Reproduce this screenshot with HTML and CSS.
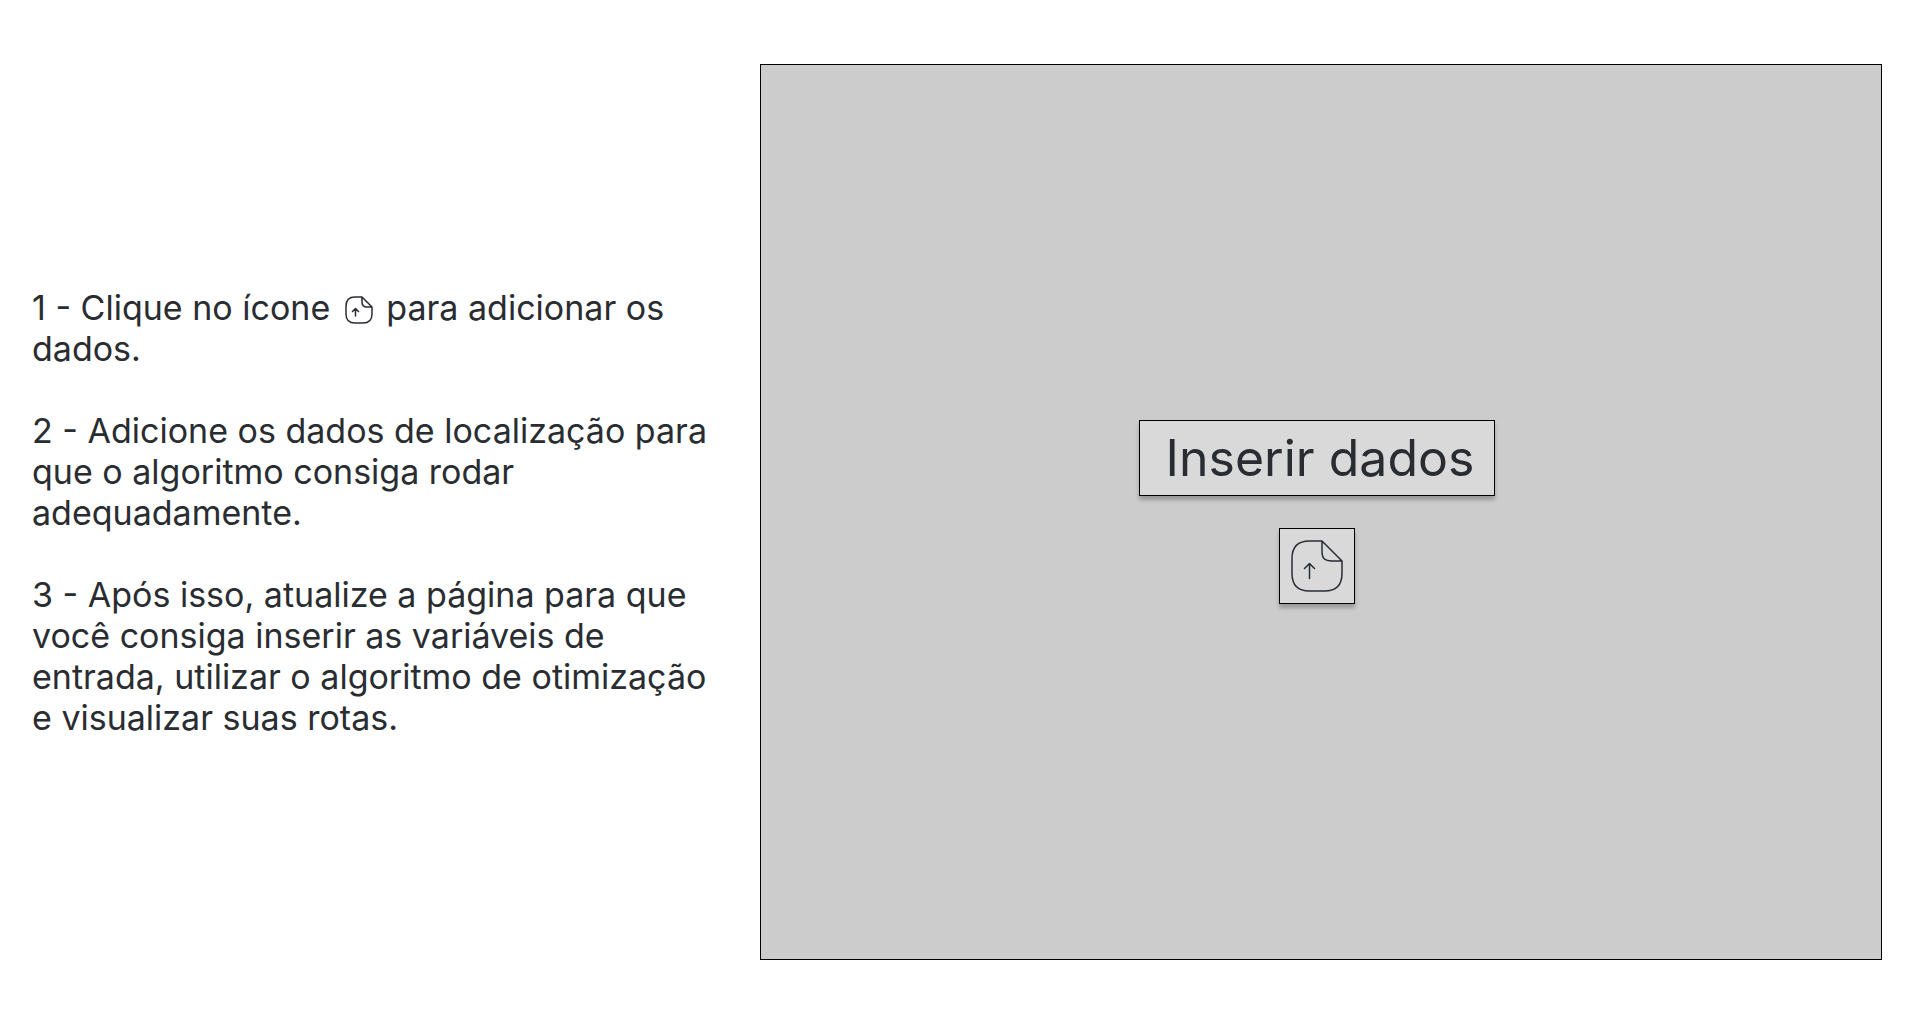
FILE: index.html
```html
<!DOCTYPE html>
<html lang="pt-BR">
<head>
<meta charset="utf-8">
<meta name="viewport" content="width=device-width, initial-scale=1">
<title>Inserir dados</title>
<link rel="stylesheet" href="styles.css">
</head>
<body>
<main class="page">
  <section class="instructions">
    <p>1 - Clique no ícone <svg class="inline-icon" viewBox="0 0 28 28" role="img" aria-label="enviar arquivo"><path d="M17 1H10C4 1 1 4 1 10V18C1 24 4 27 10 27H18C24 27 27 24 27 18V11L17 1V6C17 9.500 18.500 11 22 11H27M10.500 20V12.500M7.500 15.500L10.500 12.500L13.500 15.500"/></svg> para adicionar os dados.</p>
    <p>2 - Adicione os dados de localização para que o algoritmo consiga rodar adequadamente.</p>
    <p>3 - Após isso, atualize a página para que você consiga inserir as variáveis de entrada, utilizar o algoritmo de otimização e visualizar suas rotas.</p>
  </section>
  <section class="panel">
    <button class="button" type="button">Inserir dados</button>
    <button class="button button-upload" type="button" aria-label="Enviar arquivo">
      <svg class="upload-icon" viewBox="0 0 52 52" aria-hidden="true"><path d="M31 1H18.500C6.700 1 1 6.700 1 18.500V33.500C1 45.300 6.700 51 18.500 51H33.500C45.300 51 51 45.300 51 33.500V21L31 1V11C31 18.500 33.500 21 41 21H51M18.500 38.500V23.500M13.500 28.500L18.500 23.500L23.500 28.500"/></svg>
    </button>
  </section>
</main>
</body>
</html>
```
FILE: styles.css
```css
* {
  box-sizing: border-box;
}

body {
  margin: 0;
  background: #fff;
  color: #292d32;
  font-family: Inter, "Liberation Sans", sans-serif;
}

.page {
  display: grid;
  grid-template-columns: 696fr 1122fr;
  gap: 32px;
  min-height: 100vh;
  padding: 64px 38px 64px 32px;
}

.instructions {
  display: flex;
  flex-direction: column;
  justify-content: center;
  gap: 41px;
  font-size: 34px;
  line-height: 41px;
}

.instructions p {
  margin: 0;
}

.inline-icon,
.upload-icon {
  fill: none;
  stroke: #292d32;
  stroke-width: 1.5;
  stroke-linecap: round;
  stroke-linejoin: round;
}

.inline-icon {
  width: 28px;
  height: 28px;
  margin: 0 4px 0 5px;
  vertical-align: -4px;
}

.panel {
  display: flex;
  flex-direction: column;
  align-items: center;
  justify-content: center;
  gap: 32px;
  padding-right: 8px;
  border: 1px solid #000;
  background: #ccc;
}

.button {
  height: 76px;
  padding: 0 20px 0 26px;
  border: 1px solid #000;
  background: #d9d9d9;
  box-shadow: 0 4px 4px rgba(0, 0, 0, 0.25);
  color: inherit;
  font: inherit;
  font-size: 50px;
  cursor: pointer;
}

.button-upload {
  display: flex;
  align-items: center;
  justify-content: center;
  width: 76px;
  padding: 0;
}

.upload-icon {
  width: 52px;
  height: 52px;
}
```
